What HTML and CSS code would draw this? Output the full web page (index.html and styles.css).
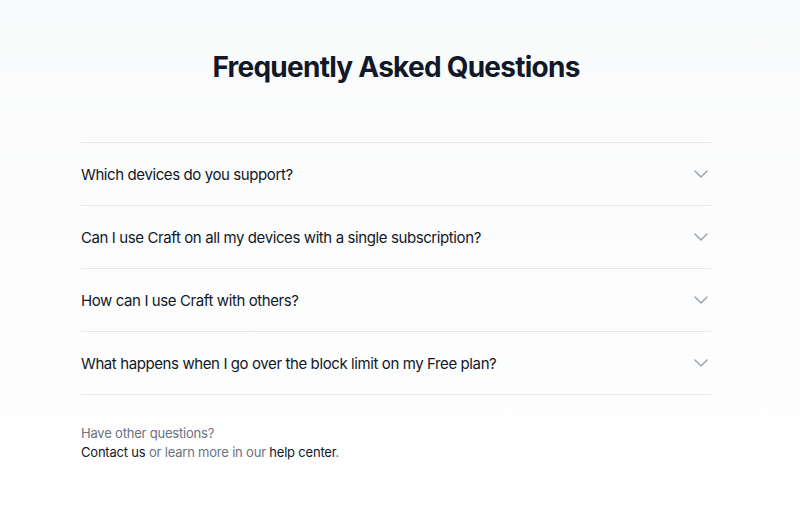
FILE: index.html
```html
<!DOCTYPE html>
<html lang="en">
<head>
<meta charset="utf-8">
<title>FAQ</title>
<link rel="stylesheet" href="styles.css">
</head>
<body>
<main class="faq">
  <h1 class="faq-title">Frequently Asked Questions</h1>
  <div class="faq-list">
    <div class="faq-item"><span class="faq-q">Which devices do you support?</span><svg class="chev" width="14" height="8" viewBox="0 0 14 8"><path d="M1 1l6 6 6-6" fill="none" stroke="#9ca3af" stroke-width="1.5" stroke-linecap="round" stroke-linejoin="round"/></svg></div>
    <div class="faq-item"><span class="faq-q">Can I use Craft on all my devices with a single subscription?</span><svg class="chev" width="14" height="8" viewBox="0 0 14 8"><path d="M1 1l6 6 6-6" fill="none" stroke="#9ca3af" stroke-width="1.5" stroke-linecap="round" stroke-linejoin="round"/></svg></div>
    <div class="faq-item"><span class="faq-q">How can I use Craft with others?</span><svg class="chev" width="14" height="8" viewBox="0 0 14 8"><path d="M1 1l6 6 6-6" fill="none" stroke="#9ca3af" stroke-width="1.5" stroke-linecap="round" stroke-linejoin="round"/></svg></div>
    <div class="faq-item"><span class="faq-q">What happens when I go over the block limit on my Free plan?</span><svg class="chev" width="14" height="8" viewBox="0 0 14 8"><path d="M1 1l6 6 6-6" fill="none" stroke="#9ca3af" stroke-width="1.5" stroke-linecap="round" stroke-linejoin="round"/></svg></div>
  </div>
  <div class="faq-foot">
    <p class="muted">Have other questions?</p>
    <p><a class="dark">Contact us</a><span class="muted"> or learn more in our </span><a class="dark">help center</a><span class="muted">.</span></p>
  </div>
</main>
</body>
</html>
```
FILE: styles.css
```css
html, body {
  margin: 0;
  padding: 0;
}
body {
  font-family: Inter, "Noto Sans", sans-serif;
  background: linear-gradient(to bottom, #f9fafb 0%, #ffffff 100%);
  min-height: 521px;
  color: #111827;
}
.faq {
  width: 630px;
  margin-left: 81px;
  padding-top: 49px;
}
.faq-title {
  margin: 0;
  text-align: center;
  font-size: 28px;
  line-height: 36px;
  font-weight: 700;
  letter-spacing: -0.75px;
  color: #111827;
}
.faq-list {
  margin-top: 57px;
  border-top: 1px solid #e5e7eb;
}
.faq-item {
  display: flex;
  align-items: center;
  justify-content: space-between;
  height: 62px;
  border-bottom: 1px solid #e5e7eb;
}
.faq-q {
  font-size: 15px;
  font-weight: 400;
  letter-spacing: -0.4px;
  color: #111827;
}
.chev {
  margin-right: 3px;
}
.faq-foot {
  margin-top: 29px;
  font-size: 13px;
  line-height: 19px;
  letter-spacing: -0.2px;
}
.faq-foot p {
  margin: 0;
}
.muted {
  color: #6b7280;
}
.dark {
  color: #111827;
}
```
